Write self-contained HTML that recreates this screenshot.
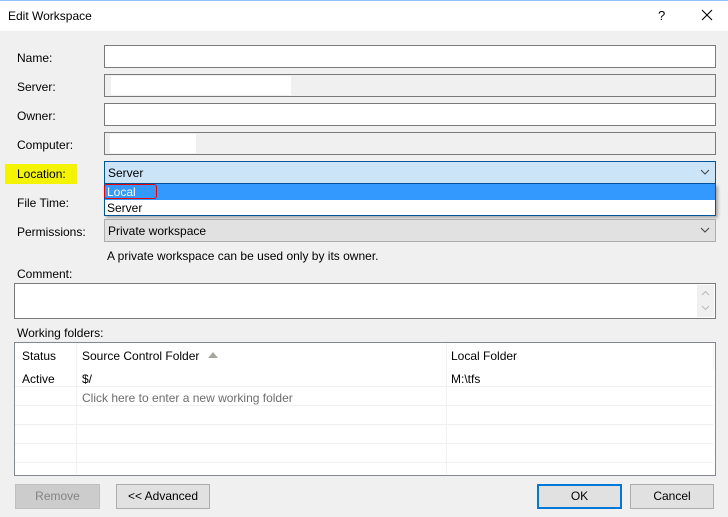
<!DOCTYPE html><html><head><style>
*{box-sizing:border-box;margin:0;padding:0}
body{width:728px;height:517px;background:#f0f0f0;font-family:"Liberation Sans",sans-serif;font-size:12px;color:#000;position:relative;overflow:hidden}
.a{position:absolute}
.f{position:absolute;left:104px;width:612px;height:23px;border:1px solid #7a7a7a;background:#fff}
.l{position:absolute;left:17px}
.btn{position:absolute;top:484px;height:25px;border:1px solid #adadad;background:#e1e1e1;text-align:center;line-height:23px}
.hl{position:absolute;left:15px;width:698px;height:1px;background:#f0f0f0}
.vl{position:absolute;width:1px;background:#f0f0f0}
.chev{position:absolute;right:5px;top:7px}
</style></head><body>
<div class="a" style="left:0;top:0;width:728px;height:31px;background:#fff;border-top:1px solid #8ec3f5"></div>
<div class="a" style="left:8px;top:9px">Edit Workspace</div>
<div class="a" style="left:658px;top:8px;font-size:13px">?</div>
<svg class="a" style="left:701px;top:9px" width="12" height="12"><path d="M1 1L11 11M11 1L1 11" stroke="#000" stroke-width="1.1"/></svg>

<div class="l" style="top:51px">Name:</div><div class="f" style="top:45px"></div>
<div class="l" style="top:80px">Server:</div><div class="f" style="top:74px;background:#f0f0f0"><div class="a" style="left:6px;top:1px;width:180px;height:19px;background:#fff"></div></div>
<div class="l" style="top:109px">Owner:</div><div class="f" style="top:103px"></div>
<div class="l" style="top:138px">Computer:</div><div class="f" style="top:132px;background:#f0f0f0"><div class="a" style="left:5px;top:1px;width:86px;height:19px;background:#fff"></div></div>
<div class="a" style="left:5px;top:164px;width:72px;height:20px;background:#f4f400"></div>
<div class="l" style="top:167px">Location:</div>
<div class="f" style="top:161px;background:#cce4f7;border-color:#005499;padding:4px 3px">Server<svg class="chev" width="10" height="6"><path d="M1 1L5 5L9 1" fill="none" stroke="#444"/></svg></div>
<div class="l" style="top:196px">File Time:</div>
<div class="a" style="left:104px;top:184px;width:612px;height:32px;border:1px solid #005499;border-top:none;background:#fff;box-shadow:2px 2px 3px rgba(0,0,0,.3)">
<div style="height:16px;background:#3399ff;color:#fff;padding:1px 2px">Local</div>
<div style="padding:1px 2px">Server</div></div>
<div class="a" style="left:104px;top:184px;width:53px;height:15px;border:1.5px solid #e00;border-radius:3px"></div>
<div class="l" style="top:225px">Permissions:</div>
<div class="f" style="top:219px;background:#e1e1e1;border-color:#adadad;padding:4px 3px">Private workspace<svg class="chev" width="10" height="6"><path d="M1 1L5 5L9 1" fill="none" stroke="#444"/></svg></div>
<div class="a" style="left:107px;top:249px">A private workspace can be used only by its owner.</div>
<div class="l" style="top:267px">Comment:</div>
<div class="a" style="left:14px;top:283px;width:702px;height:36px;border:1px solid #7a7a7a;background:#fff"><div class="a" style="right:1px;top:1px;width:17px;height:32px;background:#f0f0f0">
<svg width="17" height="32"><path d="M5 10L8.5 6.5L12 10M5 21L8.5 24.5L12 21" fill="none" stroke="#bbb"/></svg></div></div>
<div class="l" style="top:326px">Working folders:</div>
<div class="a" style="left:14px;top:342px;width:702px;height:134px;border:1px solid #828790;background:#fff"></div>
<div class="hl" style="top:386px"></div><div class="hl" style="top:405px"></div><div class="hl" style="top:424px"></div><div class="hl" style="top:443px"></div><div class="hl" style="top:462px"></div>
<div class="vl" style="left:76px;top:343px;height:131px"></div><div class="vl" style="left:446px;top:343px;height:131px"></div><div class="vl" style="left:713px;top:343px;height:26px"></div>
<div class="a" style="left:22px;top:349px">Status</div>
<div class="a" style="left:82px;top:349px">Source Control Folder</div>
<svg class="a" style="left:208px;top:352px" width="10" height="6"><path d="M0 6L5 0L10 6Z" fill="#a8a8a0"/></svg>
<div class="a" style="left:451px;top:349px">Local Folder</div>
<div class="a" style="left:22px;top:372px">Active</div>
<div class="a" style="left:82px;top:372px">$/</div>
<div class="a" style="left:451px;top:372px">M:\tfs</div>
<div class="a" style="left:82px;top:391px;color:#6d6d6d">Click here to enter a new working folder</div>
<div class="btn" style="left:15px;width:85px;background:#cccccc;border-color:#bfbfbf;color:#838383">Remove</div>
<div class="btn" style="left:116px;width:94px">&lt;&lt; Advanced</div>
<div class="btn" style="left:537px;width:85px;border:2px solid #0078d7;line-height:21px">OK</div>
<div class="btn" style="left:630px;width:84px">Cancel</div>
</body></html>
